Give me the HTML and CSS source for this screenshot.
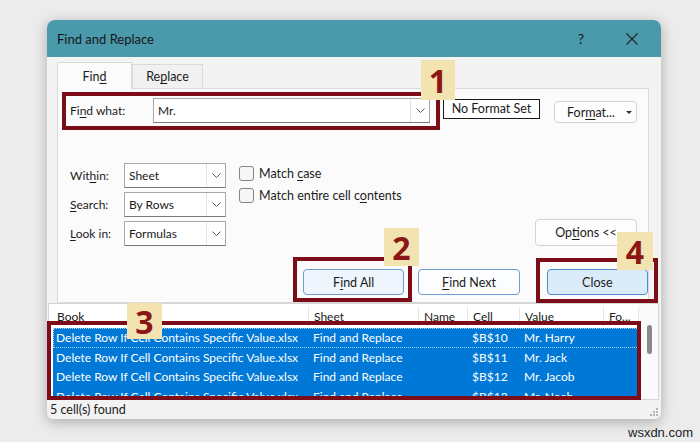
FILE: index.html
```html
<!DOCTYPE html>
<html lang="en">
<head>
<meta charset="UTF-8">
<title>Find and Replace</title>
<link rel="stylesheet" href="styles.css">
</head>
<body>
<div class="dialog">
    <div class="titlebar">
        <span class="title">Find and Replace</span>
        <span class="help">?</span>
        <span class="close-x">
            <svg width="12" height="12" viewBox="0 0 12 12"><path d="M0.5 0.5 L11.5 11.5 M11.5 0.5 L0.5 11.5" stroke="#222" stroke-width="1.1" fill="none"/></svg>
        </span>
    </div>

    <div class="tabs">
        <div class="tab active"><span>Fin<u>d</u></span></div>
        <div class="tab"><span>Re<u>p</u>lace</span></div>
    </div>

    <div class="panel">
        <div class="find-row">
            <span class="find-label">Fi<u>n</u>d what:</span>
            <div class="combo find-combo">
                <span class="combo-text">Mr.</span>
                <span class="combo-arrow"><svg width="9" height="5" viewBox="0 0 9 5"><polyline points="0.5,0.5 4.5,4.5 8.5,0.5" stroke="#555" fill="none"/></svg></span>
            </div>
            <div class="no-format">No Format Set</div>
            <div class="btn format-btn"><span>For<u>m</u>at...</span><span class="tri"></span></div>
        </div>

        <div class="options">
            <div class="opt-grid">
                <span class="opt-label">Wit<u>h</u>in:</span>
                <div class="combo sel">
                    <span class="combo-text">Sheet</span>
                    <span class="combo-arrow"><svg width="9" height="5" viewBox="0 0 9 5"><polyline points="0.5,0.5 4.5,4.5 8.5,0.5" stroke="#555" fill="none"/></svg></span>
                </div>
                <span class="opt-label"><u>S</u>earch:</span>
                <div class="combo sel">
                    <span class="combo-text">By Rows</span>
                    <span class="combo-arrow"><svg width="9" height="5" viewBox="0 0 9 5"><polyline points="0.5,0.5 4.5,4.5 8.5,0.5" stroke="#555" fill="none"/></svg></span>
                </div>
                <span class="opt-label"><u>L</u>ook in:</span>
                <div class="combo sel">
                    <span class="combo-text">Formulas</span>
                    <span class="combo-arrow"><svg width="9" height="5" viewBox="0 0 9 5"><polyline points="0.5,0.5 4.5,4.5 8.5,0.5" stroke="#555" fill="none"/></svg></span>
                </div>
            </div>
            <div class="checks">
                <div class="check"><span class="box"></span><span>Match <u>c</u>ase</span></div>
                <div class="check"><span class="box"></span><span>Match entire cell c<u>o</u>ntents</span></div>
            </div>
            <div class="btn options-btn"><span>Op<u>t</u>ions &lt;&lt;</span></div>
        </div>

        <div class="actions">
            <div class="btn action find-all"><span>F<u>i</u>nd All</span></div>
            <div class="btn action find-next"><span><u>F</u>ind Next</span></div>
            <div class="btn action close-btn"><span>Close</span></div>
        </div>
    </div>

    <div class="results">
        <div class="list">
            <div class="row head">
                <span>Book</span><span>Sheet</span><span>Name</span><span>Cell</span><span>Value</span><span>Fo...</span>
            </div>
            <div class="row sel-row focus">
                <span>Delete Row If Cell Contains Specific Value.xlsx</span><span>Find and Replace</span><span></span><span>$B$10</span><span>Mr. Harry</span><span></span>
            </div>
            <div class="row sel-row">
                <span>Delete Row If Cell Contains Specific Value.xlsx</span><span>Find and Replace</span><span></span><span>$B$11</span><span>Mr. Jack</span><span></span>
            </div>
            <div class="row sel-row">
                <span>Delete Row If Cell Contains Specific Value.xlsx</span><span>Find and Replace</span><span></span><span>$B$12</span><span>Mr. Jacob</span><span></span>
            </div>
            <div class="row sel-row">
                <span>Delete Row If Cell Contains Specific Value.xlsx</span><span>Find and Replace</span><span></span><span>$B$13</span><span>Mr. Noah</span><span></span>
            </div>
        </div>
        <div class="scrollbar"><div class="thumb"></div></div>
    </div>

    <div class="status">
        <span>5 cell(s) found</span>
        <svg class="grip" width="8" height="8" viewBox="0 0 8 8"><g fill="#b5b5b5"><rect x="6" y="0" width="2" height="2"/><rect x="3" y="3" width="2" height="2"/><rect x="6" y="3" width="2" height="2"/><rect x="0" y="6" width="2" height="2"/><rect x="3" y="6" width="2" height="2"/><rect x="6" y="6" width="2" height="2"/></g></svg>
    </div>

    <!-- annotations drawn over the dialog -->
    <div class="mark mark-1"></div>
    <div class="mark mark-2"></div>
    <div class="mark mark-3"></div>
    <div class="mark mark-4"></div>
    <div class="badge badge-1">1</div>
    <div class="badge badge-2">2</div>
    <div class="badge badge-3">3</div>
    <div class="badge badge-4">4</div>
</div>
<div class="watermark">wsxdn.com</div>
</body>
</html>
```

FILE: styles.css
```css
body {
    margin: 0;
    width: 700px;
    height: 442px;
    overflow: hidden;
    background: #ececec;
    font-family: Lato, "Noto Sans", sans-serif;
    font-size: 12px;
    color: #1b1b1b;
}

u {
    text-decoration-thickness: 1px;
    text-underline-offset: 2px;
}

.dialog {
    position: relative;
    margin: 20px 0 0 47px;
    width: 614px;
    height: 399px;
    background: #f3f3f3;
    border-radius: 8px 8px 6px 6px;
    box-shadow: 0 3px 14px rgba(0, 0, 0, 0.28);
    display: flex;
    flex-direction: column;
}

.titlebar {
    height: 37px;
    flex-shrink: 0;
    background: #4a9aab;
    border-radius: 8px 8px 0 0;
    display: flex;
    align-items: center;
    padding-left: 10px;
    font-size: 13px;
    color: #161616;
}

.title { flex: 1; }

.help {
    font-size: 14px;
    margin-right: 42px;
}

.close-x {
    display: flex;
    margin-right: 23px;
}

/* tabs */
.tabs {
    display: flex;
    margin: 5px 0 0 10px;
    height: 26px;
    align-items: flex-end;
}

.tab {
    box-sizing: border-box;
    height: 24px;
    width: 71px;
    display: flex;
    align-items: center;
    justify-content: center;
    border: 1px solid #dadada;
    border-bottom: none;
    background: #f1f1f1;
    font-size: 12.5px;
}

.tab.active {
    height: 27px;
    width: 75px;
    background: #fbfbfb;
    margin-bottom: -1px;
    position: relative;
    z-index: 1;
}

/* tab page */
.panel {
    box-sizing: border-box;
    height: 215px;
    margin: 0 12px 0 10px;
    border: 1px solid #dadada;
    background: #fbfbfb;
    padding: 9px 0 0 12px;
    display: flex;
    flex-direction: column;
}

.find-row {
    display: flex;
    align-items: center;
    height: 25px;
}

.find-label { width: 83px; }

.combo {
    box-sizing: border-box;
    display: flex;
    align-items: center;
    background: #fff;
    border: 1px solid #a8a8a8;
    border-bottom-color: #7a7a7a;
    height: 25px;
}

.combo-text {
    flex: 1;
    padding-left: 4px;
}

.combo-arrow {
    width: 18px;
    height: 100%;
    border-left: 1px solid #e3e3e3;
    display: flex;
    align-items: center;
    justify-content: center;
}

.find-combo { width: 277px; }

.no-format {
    box-sizing: border-box;
    margin-left: 13px;
    width: 97px;
    height: 20px;
    margin-top: -4px;
    border: 1px solid #1a1a1a;
    background: #fff;
    display: flex;
    align-items: center;
    justify-content: center;
    font-size: 12.5px;
}

.btn {
    box-sizing: border-box;
    display: flex;
    align-items: center;
    justify-content: center;
    background: #fdfdfd;
    border: 1px solid #d2d2d2;
    border-radius: 4px;
}

.format-btn {
    margin-left: 14px;
    width: 83px;
    height: 22px;
    margin-top: 3px;
    gap: 11px;
    padding-left: 8px;
    font-size: 12.5px;
}

.tri {
    width: 0;
    height: 0;
    border-left: 3px solid transparent;
    border-right: 3px solid transparent;
    border-top: 3px solid #333;
}

/* search options */
.options {
    display: flex;
    align-items: flex-start;
    margin-top: 40px;
    height: 83px;
}

.opt-grid {
    display: grid;
    grid-template-columns: 54px 102px;
    grid-auto-rows: 25px;
    row-gap: 4px;
    align-items: center;
}

.checks {
    margin-left: 13px;
    margin-top: 3px;
    display: flex;
    flex-direction: column;
    gap: 7px;
}

.check {
    display: flex;
    align-items: center;
    gap: 5px;
    font-size: 12.5px;
}

.box {
    box-sizing: border-box;
    width: 15px;
    height: 15px;
    border: 1px solid #858585;
    border-radius: 3px;
    background: #f6f6f6;
}

.options-btn {
    margin-left: auto;
    margin-right: 11px;
    align-self: flex-end;
    width: 102px;
    height: 27px;
    font-size: 12.5px;
}

/* action buttons */
.actions {
    display: flex;
    margin-top: 23px;
    padding-left: 233px;
}

.action {
    width: 102px;
    height: 26px;
    font-size: 12.5px;
    border-color: #6d9dd3;
}

.find-all { background: #eef5fc; }

.find-next {
    margin-left: 14px;
    background: #fcfdff;
}

.close-btn {
    margin-left: 27px;
    background: #dcebfa;
    border: 1.5px solid #4b8bd2;
}

/* results list */
.results {
    box-sizing: border-box;
    height: 97px;
    margin: 0 2px 0 1px;
    background: #fff;
    border: 1px solid #d4d4d4;
    display: flex;
    overflow: hidden;
}

.list {
    width: 590px;
    overflow: hidden;
}

.row {
    display: grid;
    grid-template-columns: 259px 110px 49px 52px 84px 36px;
    height: 19.5px;
    align-items: center;
    white-space: nowrap;
}

.row span {
    overflow: hidden;
    padding-left: 5px;
}

.row span:first-child { padding-left: 7px; }

.head {
    height: 24px;
    padding-top: 2px;
    box-sizing: border-box;
}

.head span {
    border-left: 1px solid #e5e5e5;
    line-height: 20px;
}

.head span:first-child {
    border-left: none;
    padding-left: 8px;
}

.head span:last-child { border-right: 1px solid #e5e5e5; }

.sel-row {
    background: #0078d7;
    color: #fff;
    margin-left: 4px;
    grid-template-columns: 255px 110px 49px 52px 84px 36px;
}

.sel-row span:first-child { padding-left: 3px; }

.focus {
    outline: 1px dotted rgba(255, 255, 255, 0.7);
    outline-offset: -1px;
}

.scrollbar {
    flex: 1;
    position: relative;
    background: #fafafa;
}

.thumb {
    position: absolute;
    left: 8px;
    top: 21px;
    width: 5px;
    height: 29px;
    border-radius: 3px;
    background: #8a8a8a;
}

.status {
    flex: 1;
    display: flex;
    align-items: center;
    padding: 0 3px 0 3px;
    font-size: 12.5px;
}

.status span { flex: 1; }

.grip { align-self: flex-end; margin-bottom: 3px; }

/* annotations */
.mark {
    position: absolute;
    box-sizing: border-box;
    border: 4px solid #7b0c18;
}

.mark-1 { left: 15px; top: 72px; width: 378px; height: 38px; }
.mark-2 { left: 246px; top: 237px; width: 119px; height: 45px; }
.mark-3 { left: 0; top: 301px; width: 594px; height: 79px; }
.mark-4 { left: 489px; top: 238px; width: 122px; height: 45px; }

.badge {
    position: absolute;
    background: #f2e3b0;
    color: #8a1616;
    font-family: "Open Sans", Lato, sans-serif;
    font-weight: 700;
    font-size: 32px;
    display: flex;
    align-items: center;
    justify-content: center;
}

.badge-1 { left: 374px; top: 40px; width: 34px; height: 40px; }
.badge-2 { left: 337px; top: 208px; width: 35px; height: 38px; }
.badge-3 { left: 80px; top: 283px; width: 35px; height: 36px; }
.badge-4 { left: 570px; top: 212px; width: 36px; height: 38px; }

.watermark {
    margin-top: 6px;
    padding-left: 628px;
    white-space: nowrap;
    font-family: "Liberation Sans", sans-serif;
    font-size: 13px;
    color: #222;
}
```
